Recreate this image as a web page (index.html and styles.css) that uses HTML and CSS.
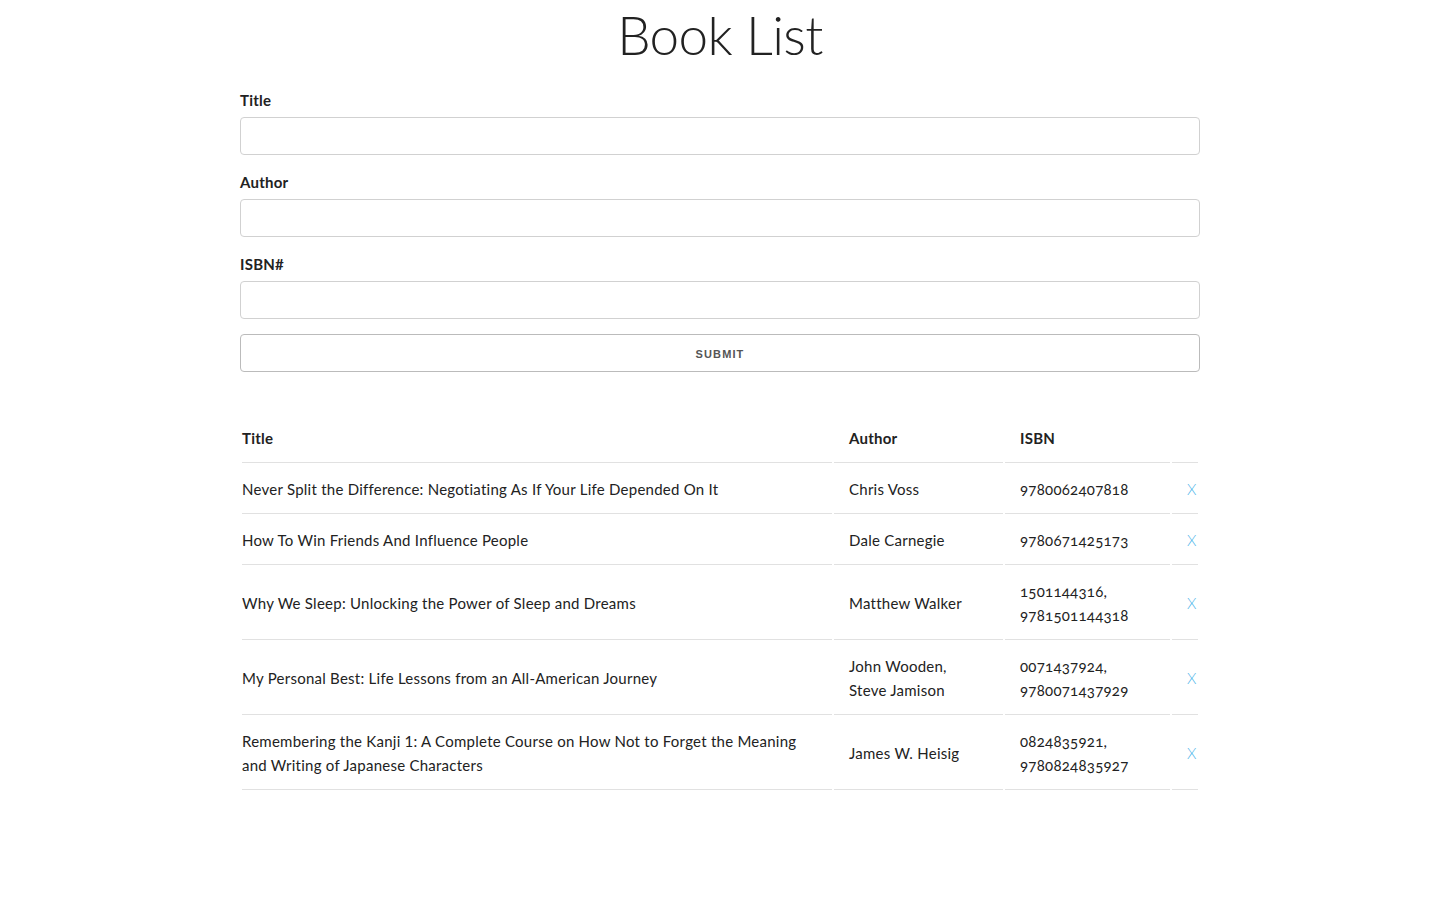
FILE: index.html
```html
<!DOCTYPE html>
<html lang="en">
<head>
<meta charset="utf-8">
<title>Book List</title>
<link rel="stylesheet" href="styles.css">
</head>
<body>
<div class="container">
  <h1 class="page-title">Book List</h1>
  <form class="book-form">
    <label class="field-label" for="title">Title</label>
    <input class="field-input" id="title" type="text">
    <label class="field-label" for="author">Author</label>
    <input class="field-input" id="author" type="text">
    <label class="field-label" for="isbn">ISBN#</label>
    <input class="field-input" id="isbn" type="text">
    <button class="submit-btn" type="button">Submit</button>
  </form>
  <table class="book-table">
    <thead>
      <tr>
        <th class="col-title">Title</th>
        <th class="col-author">Author</th>
        <th class="col-isbn">ISBN</th>
        <th class="col-del"></th>
      </tr>
    </thead>
    <tbody>
      <tr>
        <td>Never Split the Difference: Negotiating As If Your Life Depended On It</td>
        <td>Chris Voss</td>
        <td class="num">9780062407818</td>
        <td><a class="delete" href="#">X</a></td>
      </tr>
      <tr>
        <td>How To Win Friends And Influence People</td>
        <td>Dale Carnegie</td>
        <td class="num">9780671425173</td>
        <td><a class="delete" href="#">X</a></td>
      </tr>
      <tr>
        <td>Why We Sleep: Unlocking the Power of Sleep and Dreams</td>
        <td>Matthew Walker</td>
        <td class="num">1501144316, 9781501144318</td>
        <td><a class="delete" href="#">X</a></td>
      </tr>
      <tr>
        <td>My Personal Best: Life Lessons from an All-American Journey</td>
        <td>John Wooden, Steve Jamison</td>
        <td class="num">0071437924, 9780071437929</td>
        <td><a class="delete" href="#">X</a></td>
      </tr>
      <tr>
        <td>Remembering the Kanji 1: A Complete Course on How Not to Forget the Meaning and Writing of Japanese Characters</td>
        <td>James W. Heisig</td>
        <td class="num">0824835921, 9780824835927</td>
        <td><a class="delete" href="#">X</a></td>
      </tr>
    </tbody>
  </table>
</div>
</body>
</html>
```
FILE: styles.css
```css
* { box-sizing: border-box; }
html, body { margin: 0; padding: 0; background: #fff; }
body {
  font-family: Lato, "Open Sans", sans-serif;
  font-size: 15px;
  line-height: 1.6;
  color: #222;
  letter-spacing: 0.25px;
}
.container {
  width: 960px;
  margin: 0 auto;
  padding-top: 5px;
}
.page-title {
  margin: 0 0 23px;
  font-size: 53px;
  line-height: 60px;
  font-weight: 300;
  letter-spacing: -0.6px;
  text-align: center;
}
.book-form {
  display: flex;
  flex-direction: column;
  margin: 0 0 40px;
}
.field-label {
  display: block;
  margin-bottom: 5px;
  font-weight: 700;
  line-height: 24px;
}
.field-input {
  height: 38px;
  padding: 6px 10px;
  border: 1px solid #d1d1d1;
  border-radius: 4px;
  background: #fff;
  margin: 0 0 15px;
  font: inherit;
}
.submit-btn {
  height: 38px;
  padding: 0 30px;
  border: 1px solid #bbb;
  border-radius: 4px;
  background: transparent;
  color: #555;
  font-family: "Liberation Sans", Arial, sans-serif;
  font-size: 11px;
  font-weight: 700;
  letter-spacing: 1.1px;
  text-transform: uppercase;
  line-height: 38px;
  text-align: center;
}
.book-table {
  width: 960px;
  table-layout: fixed;
  border-collapse: separate;
  border-spacing: 2px;
}
.book-table th, .book-table td {
  padding: 12px 15px;
  text-align: left;
  vertical-align: middle;
  border-bottom: 1px solid #e1e1e1;
  line-height: 24px;
}
.book-table th { font-weight: 700; }
.book-table th:first-child, .book-table td:first-child { padding-left: 0; }
.book-table th:last-child, .book-table td:last-child { padding-right: 0; }
.col-title { width: 590px; }
.col-author { width: 169px; }
.col-isbn { width: 165px; }
.col-del { width: 26px; }
.num { font-variant-numeric: oldstyle-nums; }
.delete {
  color: #4fb6ea;
  text-decoration: none;
  font-weight: 300;
}
```
